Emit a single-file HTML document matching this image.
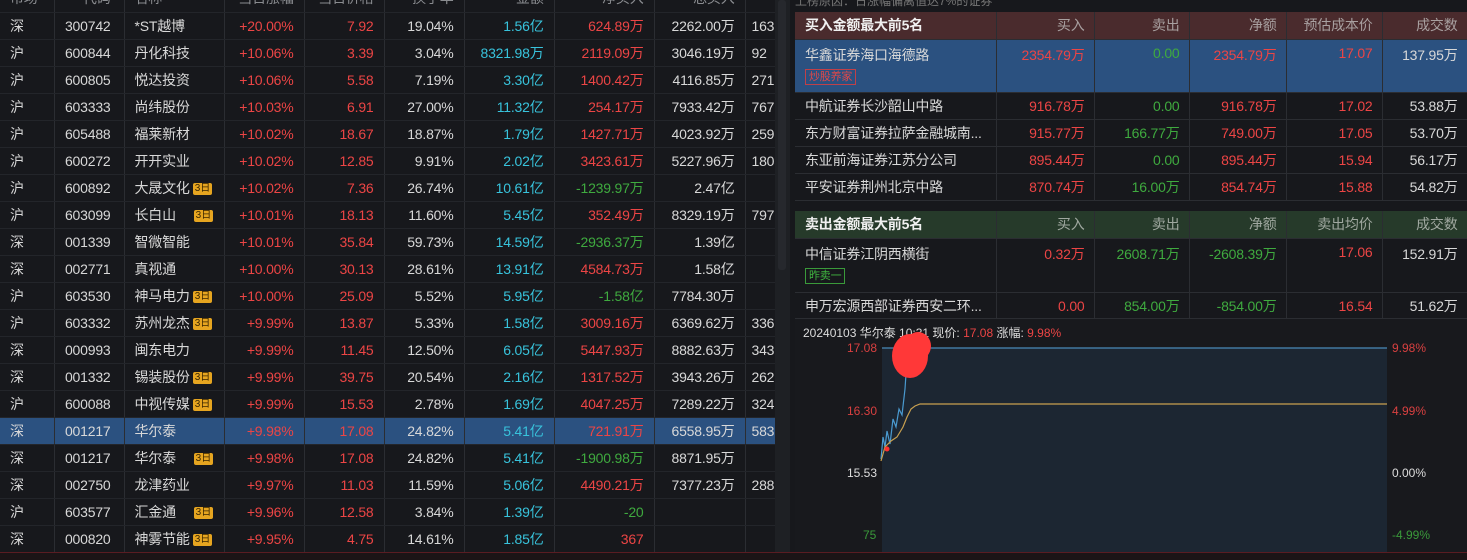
<!DOCTYPE html>
<html><head><meta charset="utf-8"><style>
*{margin:0;padding:0;box-sizing:border-box}
body{width:1467px;height:560px;overflow:hidden;background:#17181c;font-family:"Liberation Sans","Noto Sans CJK SC",sans-serif;font-size:14px;color:#d8d8d8;position:relative}
.lt{position:absolute;left:0;top:-15px;border-collapse:collapse;table-layout:fixed;width:775px}
.lt td{height:27px;border-right:1px solid #2b2d32;border-bottom:1px solid #23252a;text-align:right;padding-right:10px;white-space:nowrap;overflow:hidden;letter-spacing:-0.2px}
.lt td:nth-child(1){text-align:left;padding-left:10px}
.lt td:nth-child(3){text-align:left;padding-left:10px}
.lt td:nth-child(10){text-align:left;padding-left:6px;padding-right:0}
.lt td:nth-child(2){padding-right:13px}
.lt tr.h td{color:#8a8c90}
.lt tr.sel td{background:#2b5180}
.r{color:#ec4545}.c{color:#38c3dc}.g{color:#3faa3f}
.b{display:inline-block;background:#e6a520;color:#3a2600;font-size:10px;line-height:12px;padding:0 2px;border-radius:2px;margin-left:3px;vertical-align:2px;letter-spacing:0}
.sb{position:absolute;left:775px;top:0;width:15px;height:552px;background:#1e2024}
.sb i{position:absolute;left:3px;top:0;width:8px;height:270px;background:#26282d;border-radius:3px}
.rp{position:absolute;left:795px;top:12px;width:672px;border-collapse:collapse;table-layout:fixed}
.rp td{border-right:1px solid #2b2d32;border-bottom:1px solid #2b2d32;text-align:right;padding-right:9px;height:27px;white-space:nowrap;overflow:hidden;vertical-align:middle;letter-spacing:-0.2px}
.rp td:first-child{text-align:left;padding-left:10px}
.hdr1 td{background:#4a2b2d;color:#a8a0a0}.hdr1 td:first-child,.hdr2 td:first-child{color:#f0f0f0;font-weight:bold}
.hdr2 td{background:#263a2a;color:#a0a8a0}
.rp tr.sel td{background:#2b5180}
.tag{display:inline-block;border:1px solid;font-size:11px;padding:0 3px;line-height:14px;margin-top:4px}
.chart{position:absolute;left:795px;top:318px;width:672px;height:237px;background:#18191d;border-top:1px solid #2b2d32}
.bot{position:absolute;left:0;top:552px;width:1467px;height:8px;background:#1b1416;border-top:1px solid #5a1c22}
</style></head><body>
<table class="lt">
<colgroup><col style="width:54px"><col style="width:70px"><col style="width:100px"><col style="width:80px"><col style="width:80px"><col style="width:80px"><col style="width:90px"><col style="width:100px"><col style="width:91px"><col style="width:30px"></colgroup>
<tr class="h"><td>市场</td><td>代码</td><td>名称</td><td>当日涨幅</td><td>当日价格</td><td>换手率</td><td>金额</td><td>净买入</td><td>总买入</td><td></td></tr>
<tr><td>深</td><td>300742</td><td>*ST越博</td><td class="r">+20.00%</td><td class="r">7.92</td><td>19.04%</td><td class="c">1.56亿</td><td class="r">624.89万</td><td>2262.00万</td><td>163</td></tr>
<tr><td>沪</td><td>600844</td><td>丹化科技</td><td class="r">+10.06%</td><td class="r">3.39</td><td>3.04%</td><td class="c">8321.98万</td><td class="r">2119.09万</td><td>3046.19万</td><td>92</td></tr>
<tr><td>沪</td><td>600805</td><td>悦达投资</td><td class="r">+10.06%</td><td class="r">5.58</td><td>7.19%</td><td class="c">3.30亿</td><td class="r">1400.42万</td><td>4116.85万</td><td>271</td></tr>
<tr><td>沪</td><td>603333</td><td>尚纬股份</td><td class="r">+10.03%</td><td class="r">6.91</td><td>27.00%</td><td class="c">11.32亿</td><td class="r">254.17万</td><td>7933.42万</td><td>767</td></tr>
<tr><td>沪</td><td>605488</td><td>福莱新材</td><td class="r">+10.02%</td><td class="r">18.67</td><td>18.87%</td><td class="c">1.79亿</td><td class="r">1427.71万</td><td>4023.92万</td><td>259</td></tr>
<tr><td>沪</td><td>600272</td><td>开开实业</td><td class="r">+10.02%</td><td class="r">12.85</td><td>9.91%</td><td class="c">2.02亿</td><td class="r">3423.61万</td><td>5227.96万</td><td>180</td></tr>
<tr><td>沪</td><td>600892</td><td>大晟文化<span class="b">3日</span></td><td class="r">+10.02%</td><td class="r">7.36</td><td>26.74%</td><td class="c">10.61亿</td><td class="g">-1239.97万</td><td>2.47亿</td><td></td></tr>
<tr><td>沪</td><td>603099</td><td>长白山&nbsp;&nbsp;&nbsp;&nbsp;<span class="b">3日</span></td><td class="r">+10.01%</td><td class="r">18.13</td><td>11.60%</td><td class="c">5.45亿</td><td class="r">352.49万</td><td>8329.19万</td><td>797</td></tr>
<tr><td>深</td><td>001339</td><td>智微智能</td><td class="r">+10.01%</td><td class="r">35.84</td><td>59.73%</td><td class="c">14.59亿</td><td class="g">-2936.37万</td><td>1.39亿</td><td></td></tr>
<tr><td>深</td><td>002771</td><td>真视通</td><td class="r">+10.00%</td><td class="r">30.13</td><td>28.61%</td><td class="c">13.91亿</td><td class="r">4584.73万</td><td>1.58亿</td><td></td></tr>
<tr><td>沪</td><td>603530</td><td>神马电力<span class="b">3日</span></td><td class="r">+10.00%</td><td class="r">25.09</td><td>5.52%</td><td class="c">5.95亿</td><td class="g">-1.58亿</td><td>7784.30万</td><td></td></tr>
<tr><td>沪</td><td>603332</td><td>苏州龙杰<span class="b">3日</span></td><td class="r">+9.99%</td><td class="r">13.87</td><td>5.33%</td><td class="c">1.58亿</td><td class="r">3009.16万</td><td>6369.62万</td><td>336</td></tr>
<tr><td>深</td><td>000993</td><td>闽东电力</td><td class="r">+9.99%</td><td class="r">11.45</td><td>12.50%</td><td class="c">6.05亿</td><td class="r">5447.93万</td><td>8882.63万</td><td>343</td></tr>
<tr><td>深</td><td>001332</td><td>锡装股份<span class="b">3日</span></td><td class="r">+9.99%</td><td class="r">39.75</td><td>20.54%</td><td class="c">2.16亿</td><td class="r">1317.52万</td><td>3943.26万</td><td>262</td></tr>
<tr><td>沪</td><td>600088</td><td>中视传媒<span class="b">3日</span></td><td class="r">+9.99%</td><td class="r">15.53</td><td>2.78%</td><td class="c">1.69亿</td><td class="r">4047.25万</td><td>7289.22万</td><td>324</td></tr>
<tr class="sel"><td>深</td><td>001217</td><td>华尔泰</td><td class="r">+9.98%</td><td class="r">17.08</td><td>24.82%</td><td class="c">5.41亿</td><td class="r">721.91万</td><td>6558.95万</td><td>583</td></tr>
<tr><td>深</td><td>001217</td><td>华尔泰&nbsp;&nbsp;&nbsp;&nbsp;<span class="b">3日</span></td><td class="r">+9.98%</td><td class="r">17.08</td><td>24.82%</td><td class="c">5.41亿</td><td class="g">-1900.98万</td><td>8871.95万</td><td></td></tr>
<tr><td>深</td><td>002750</td><td>龙津药业</td><td class="r">+9.97%</td><td class="r">11.03</td><td>11.59%</td><td class="c">5.06亿</td><td class="r">4490.21万</td><td>7377.23万</td><td>288</td></tr>
<tr><td>沪</td><td>603577</td><td>汇金通&nbsp;&nbsp;&nbsp;&nbsp;<span class="b">3日</span></td><td class="r">+9.96%</td><td class="r">12.58</td><td>3.84%</td><td class="c">1.39亿</td><td class="g">-20</td><td></td><td></td></tr>
<tr><td>深</td><td>000820</td><td>神雾节能<span class="b">3日</span></td><td class="r">+9.95%</td><td class="r">4.75</td><td>14.61%</td><td class="c">1.85亿</td><td class="r">367</td><td></td><td></td></tr>
</table>
<div class="sb"><i></i></div>
<div style="position:absolute;left:795px;top:-8px;color:#777;font-size:12px">上榜原因：日涨幅偏离值达7%的证券</div>
<table class="rp">
<colgroup><col style="width:201px"><col style="width:98px"><col style="width:95px"><col style="width:97px"><col style="width:96px"><col style="width:85px"></colgroup>
<tr class="hdr1"><td>买入金额最大前5名</td><td>买入</td><td>卖出</td><td>净额</td><td>预估成本价</td><td>成交数</td></tr>
<tr class="sel"><td style="height:53px;vertical-align:top;padding-top:5px">华鑫证券海口海德路<br><span class="tag" style="color:#e04848;border-color:#c04048">炒股养家</span></td><td class="r" style="vertical-align:top;padding-top:5px">2354.79万</td><td class="g" style="vertical-align:top;padding-top:5px">0.00</td><td class="r" style="vertical-align:top;padding-top:5px">2354.79万</td><td class="r" style="vertical-align:top;padding-top:5px">17.07</td><td style="vertical-align:top;padding-top:5px">137.95万</td></tr>
<tr><td>中航证券长沙韶山中路</td><td class="r">916.78万</td><td class="g">0.00</td><td class="r">916.78万</td><td class="r">17.02</td><td>53.88万</td></tr>
<tr><td>东方财富证券拉萨金融城南...</td><td class="r">915.77万</td><td class="g">166.77万</td><td class="r">749.00万</td><td class="r">17.05</td><td>53.70万</td></tr>
<tr><td>东亚前海证券江苏分公司</td><td class="r">895.44万</td><td class="g">0.00</td><td class="r">895.44万</td><td class="r">15.94</td><td>56.17万</td></tr>
<tr><td>平安证券荆州北京中路</td><td class="r">870.74万</td><td class="g">16.00万</td><td class="r">854.74万</td><td class="r">15.88</td><td>54.82万</td></tr>
<tr><td colspan="6" style="height:11px;border:none"></td></tr>
<tr class="hdr2"><td>卖出金额最大前5名</td><td>买入</td><td>卖出</td><td>净额</td><td>卖出均价</td><td>成交数</td></tr>
<tr><td style="height:54px;vertical-align:top;padding-top:5px">中信证券江阴西横街<br><span class="tag" style="color:#3fb43f;border-color:#3a9a3a">昨卖一</span></td><td class="r" style="vertical-align:top;padding-top:5px">0.32万</td><td class="g" style="vertical-align:top;padding-top:5px">2608.71万</td><td class="g" style="vertical-align:top;padding-top:5px">-2608.39万</td><td class="r" style="vertical-align:top;padding-top:5px">17.06</td><td style="vertical-align:top;padding-top:5px">152.91万</td></tr>
<tr><td style="height:24px">申万宏源西部证券西安二环...</td><td class="r">0.00</td><td class="g">854.00万</td><td class="g">-854.00万</td><td class="r">16.54</td><td>51.62万</td></tr>
</table>
<div class="chart">
<div style="position:absolute;left:8px;top:5px;font-size:12px;color:#ddd">20240103 华尔泰 10:31 现价: <span class="r">17.08</span> 涨幅: <span class="r">9.98%</span></div>
<svg width="672" height="237" style="position:absolute;left:0;top:0">
<rect x="87" y="29" width="505" height="208" fill="#1c2632"/>
<line x1="87" y1="29" x2="592" y2="29" stroke="#4a8ab8" stroke-width="1.2"/>
<polyline points="86,140 88,118 90,128 92,112 95,125 98,100 101,108 104,90 107,96 110,70 112,40 114,30 120,29" fill="none" stroke="#4a9ad0" stroke-width="1.2"/>
<polyline points="86,142 90,128 96,122 102,118 108,108 112,98 116,90 120,87 125,85 592,85" fill="none" stroke="#c8a050" stroke-width="1.2"/>
<circle cx="92" cy="130" r="2.5" fill="#ff3030"/>
<ellipse cx="115" cy="37" rx="18" ry="22" fill="#ff3838"/><ellipse cx="123" cy="27" rx="13" ry="14" fill="#ff3838"/>
<text x="52" y="33" fill="#d84040" font-size="12" font-family="Liberation Sans">17.08</text>
<text x="52" y="96" fill="#d84040" font-size="12" font-family="Liberation Sans">16.30</text>
<text x="52" y="158" fill="#ddd" font-size="12" font-family="Liberation Sans">15.53</text>
<text x="68" y="220" fill="#3a9a3a" font-size="12" font-family="Liberation Sans">75</text>
<text x="597" y="33" fill="#d84040" font-size="12" font-family="Liberation Sans">9.98%</text>
<text x="597" y="96" fill="#d84040" font-size="12" font-family="Liberation Sans">4.99%</text>
<text x="597" y="158" fill="#ddd" font-size="12" font-family="Liberation Sans">0.00%</text>
<text x="597" y="220" fill="#3a9a3a" font-size="12" font-family="Liberation Sans">-4.99%</text>
</svg>
</div>
<div class="bot"></div>
</body></html>
